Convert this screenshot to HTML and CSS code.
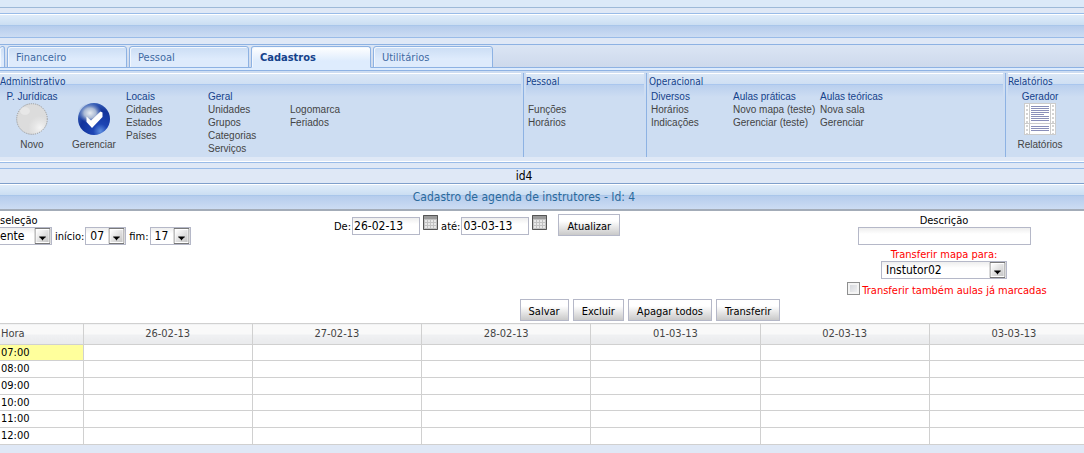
FILE: index.html
```html
<!DOCTYPE html>
<html lang="pt-BR">
<head>
<meta charset="utf-8">
<title>Cadastro de agenda de instrutores</title>
<link rel="stylesheet" href="styles.css">
</head>
<body>
<div class="top-strip"></div>
<div class="panel-header glass"></div>

<nav class="tabs">
  <button class="tab tab-cut" type="button" aria-label="Anterior"></button>
  <button class="tab" type="button">Financeiro</button>
  <button class="tab" type="button">Pessoal</button>
  <button class="tab active" type="button">Cadastros</button>
  <button class="tab" type="button">Utilitários</button>
</nav>
<div class="tab-base"></div>

<div class="ribbon">
  <section class="group group-admin">
    <h2 class="group-title">Administrativo</h2>
    <div class="group-body">
      <div class="tool tool-first">
        <b class="heading">P. Jurídicas</b>
        <svg class="tool-icon" viewBox="0 0 32 32" aria-hidden="true">
          <defs><radialGradient id="shine" cx=".76" cy=".78" r=".38"><stop offset="0" stop-color="#f4f4f4"/><stop offset=".5" stop-color="#e6e6e6"/><stop offset="1" stop-color="#dcdcdc"/></radialGradient></defs>
          <circle cx="16" cy="16" r="15.3" fill="url(#shine)" stroke="#999" stroke-dasharray="1.2 1"/>
          <ellipse cx="9" cy="8" rx="5" ry="4" fill="#f1f1f1" opacity=".5"/>
        </svg>
        <a href="#">Novo</a>
      </div>
      <div class="tool tool-second">
        <b class="heading"></b>
        <svg class="tool-icon" viewBox="0 0 32 32" aria-hidden="true">
          <defs>
            <radialGradient id="ball" cx=".7" cy=".88" r=".9"><stop offset="0" stop-color="#5f8fe0"/><stop offset=".25" stop-color="#1d45b4"/><stop offset=".7" stop-color="#12339b"/><stop offset="1" stop-color="#3a62b8"/></radialGradient>
            <radialGradient id="gloss"><stop offset="0" stop-color="#e8edf2"/><stop offset=".5" stop-color="#a9b9d4"/><stop offset="1" stop-color="#6c8ac6" stop-opacity="0"/></radialGradient>
          </defs>
          <circle cx="16" cy="16" r="16" fill="url(#ball)"/>
          <ellipse cx="12" cy="10" rx="12" ry="10" fill="url(#gloss)"/>
          <path d="M8.500 13.500 13 17.500 22.500 8.500 24.500 9.500V14L14 25 8.500 19z" fill="#fff"/>
        </svg>
        <a href="#">Gerenciar</a>
      </div>
      <div class="links"><b class="heading">Locais</b><a href="#">Cidades</a><a href="#">Estados</a><a href="#">Países</a></div>
      <div class="links"><b class="heading">Geral</b><a href="#">Unidades</a><a href="#">Grupos</a><a href="#">Categorias</a><a href="#">Serviços</a></div>
      <div class="links"><b class="heading"></b><a href="#">Logomarca</a><a href="#">Feriados</a></div>
    </div>
  </section>
  <section class="group group-staff">
    <h2 class="group-title">Pessoal</h2>
    <div class="group-body">
      <div class="links"><b class="heading"></b><a href="#">Funções</a><a href="#">Horários</a></div>
    </div>
  </section>
  <section class="group group-ops">
    <h2 class="group-title">Operacional</h2>
    <div class="group-body">
      <div class="links"><b class="heading">Diversos</b><a href="#">Horários</a><a href="#">Indicações</a></div>
      <div class="links links-wide"><b class="heading">Aulas práticas</b><a href="#">Novo mapa (teste)</a><a href="#">Gerenciar (teste)</a></div>
      <div class="links"><b class="heading">Aulas teóricas</b><a href="#">Nova sala</a><a href="#">Gerenciar</a></div>
    </div>
  </section>
  <section class="group group-reports">
    <h2 class="group-title">Relatórios</h2>
    <div class="group-body">
      <div class="tool tool-report">
        <b class="heading">Gerador</b>
        <svg class="tool-icon" viewBox="0 0 32 32" shape-rendering="crispEdges" aria-hidden="true">
          <path d="M.5.500h31v31H.5z" fill="#fff" stroke="#ccc"/>
          <path d="M3 2v29M29 2v29" stroke="#d4d4d4" stroke-width="2" stroke-dasharray="2 2"/>
          <path d="M5.500 0v32M26.500 0v32M0 20.500h32" stroke="#ccc"/>
          <path d="M7 3.500h18M7 5.500h18M7 7.500h18M7 9.500h18M7 11.500h13M7 13.500h18M7 15.500h18M7 17.500h18M7 23.500h18M7 25.500h18M7 27.500h18" stroke="#8a8fba"/>
        </svg>
        <a href="#">Relatórios</a>
      </div>
    </div>
  </section>
</div>
<div class="ribbon-foot"></div>

<div class="id-bar">id4</div>
<h1 class="title-bar glass">Cadastro de agenda de instrutores - Id: 4</h1>

<form class="form">
  <div class="filters">
    <div class="hours">
      <label for="sel">seleção</label>
      <div class="hours-row">
        <span class="select select-cut"><select id="sel"><option>ente</option></select><svg viewBox="0 0 17 17" aria-hidden="true"><use href="#arrow"/></svg></span>
        <label for="start">início:</label>
        <span class="select select-hour"><select id="start"><option>07</option></select><svg viewBox="0 0 17 17" aria-hidden="true"><use href="#arrow"/></svg></span>
        <label for="end">fim:</label>
        <span class="select select-hour"><select id="end"><option>17</option></select><svg viewBox="0 0 17 17" aria-hidden="true"><use href="#arrow"/></svg></span>
      </div>
    </div>
    <div class="dates">
      <label for="from">De:</label>
      <input class="field date" id="from" type="text" value="26-02-13">
      <svg class="calendar" viewBox="0 0 16 16" aria-hidden="true"><use href="#cal"/></svg>
      <label for="to">até:</label>
      <input class="field date" id="to" type="text" value="03-03-13">
      <svg class="calendar" viewBox="0 0 16 16" aria-hidden="true"><use href="#cal"/></svg>
      <button class="btn refresh" type="button">Atualizar</button>
    </div>
    <div class="transfer">
      <label for="desc">Descrição</label>
      <input class="field desc" id="desc" type="text">
      <label class="red" for="map">Transferir mapa para:</label>
      <span class="select select-map"><select id="map"><option>Instutor02</option></select><svg viewBox="0 0 17 17" aria-hidden="true"><use href="#arrow"/></svg></span>
      <label class="red check"><input type="checkbox">Transferir também aulas já marcadas</label>
    </div>
  </div>
  <div class="actions">
    <button class="btn" type="button">Salvar</button>
    <button class="btn" type="button">Excluir</button>
    <button class="btn" type="button">Apagar todos</button>
    <button class="btn" type="button">Transferir</button>
  </div>
</form>

<table class="agenda">
  <thead>
    <tr><th class="hour">Hora</th><th>26-02-13</th><th>27-02-13</th><th>28-02-13</th><th>01-03-13</th><th>02-03-13</th><th>03-03-13</th></tr>
  </thead>
  <tbody>
    <tr class="current"><td class="hour">07:00</td><td></td><td></td><td></td><td></td><td></td><td></td></tr>
    <tr><td class="hour">08:00</td><td></td><td></td><td></td><td></td><td></td><td></td></tr>
    <tr><td class="hour">09:00</td><td></td><td></td><td></td><td></td><td></td><td></td></tr>
    <tr><td class="hour">10:00</td><td></td><td></td><td></td><td></td><td></td><td></td></tr>
    <tr><td class="hour">11:00</td><td></td><td></td><td></td><td></td><td></td><td></td></tr>
    <tr><td class="hour">12:00</td><td></td><td></td><td></td><td></td><td></td><td></td></tr>
  </tbody>
</table>

<svg class="symbols" aria-hidden="true">
  <defs>
    <linearGradient id="face" x2="1" y2="1"><stop offset="0" stop-color="#fff"/><stop offset="1" stop-color="#c4c4c4"/></linearGradient>
    <symbol id="arrow" viewBox="0 0 17 17">
      <path d="M.5.500h16v16H.5z" fill="#fff" stroke="#6d6d6d"/>
      <path d="M2 2h13v13H2z" fill="url(#face)"/>
      <path d="M5 9h7v1h-1v1h-1v1H9v1H8v-1H7v-1H6v-1H5z" fill="#000"/>
    </symbol>
    <symbol id="cal" viewBox="0 0 16 16">
      <path d="M0 0h15v15H0z" fill="#c2c2c2"/>
      <path d="M0 0h15v4H0z" fill="#9a9a9a"/>
      <path d="M3 5v9M6 5v9M9 5v9M12 5v9" stroke="#e8e8e8" stroke-width="2" stroke-dasharray="2 1"/>
      <path d="M.5.500h14v14H.5z" fill="none" stroke="#555"/>
    </symbol>
  </defs>
</svg>
</body>
</html>
```
FILE: styles.css
```css
* { box-sizing: border-box; }

body {
  margin: 0;
  overflow: hidden;
  background: #dfe8f6;
  color: #000;
  font: 11px/13px Tahoma, "DejaVu Sans Condensed", "Noto Sans", sans-serif;
}

button, input, select { font: inherit; color: inherit; margin: 0; }
a { color: #444; text-decoration: none; }

.top-strip {
  height: 8px;
  background: #dbe9f8;
  border-bottom: 1px solid #9db9d8;
}

.glass {
  background: linear-gradient(#fff 0 1px, #dfecfa 1px, #cbdef2 11px, #a9c6ea 11px 12px, #b5ccec 12px, #ccdcf3 100%);
  border: solid #99bbe8;
  border-width: 1px 0;
}
.panel-header { height: 25px; margin: 5px 0 6px; }

.tabs {
  display: flex;
  gap: 2px;
  height: 24px;
  padding-top: 1px;
  border-top: 1px solid #8db2e3;
  border-bottom: 1px solid #8db2e3;
  background: linear-gradient(#dbe5f4, #cdd9ec);
}
.tab {
  width: 120px;
  height: 22px;
  padding: 0 8px;
  border: 1px solid #8db2e3;
  border-radius: 3px 3px 0 0;
  background: linear-gradient(#cbddf4, #deebfc 60%);
  box-shadow: inset 1px 1px #f2f7fd;
  color: #416aa3;
  line-height: 19px;
  text-align: left;
}
.tab-cut { width: 5px; padding: 0; border-left: 0; }
.tab.active {
  border-bottom-color: #deecfd;
  background: linear-gradient(#fff, #deecfd 70%);
  color: #15428b;
  font-weight: bold;
}
.tab-base { height: 3px; background: #deecfd; border-bottom: 1px solid #8db2e3; }

.ribbon {
  display: flex;
  padding-top: 2px;
  background: #cdddf2;
}
.group { min-height: 84px; border-left: 1px solid #8db2e3; padding: 0 2px; }
.group-admin { flex: 0 0 523px; border-left: 0; padding-left: 0; }
.group-staff { flex: 0 0 123px; }
.group-ops { flex: 1 1 auto; }
.group-reports { flex: 0 0 79px; padding-right: 0; }
.group-title {
  height: 24px;
  margin: 0;
  background: linear-gradient(#fff 0 1px, #dae7f6 1px, #cfdff3 11px, #a9c6ee 11px 12px, #b9cfee 12px, #cdddf2 24px);
  color: #15428b;
  font-size: 10px;
  font-weight: normal;
  line-height: 18px;
}
.group-body {
  display: flex;
  margin-top: -7px;
  font: 10px/13px "Liberation Sans", Arial, sans-serif;
}
.heading { display: block; min-height: 13px; color: #15428b; font-weight: normal; }
.links { flex: 0 0 82px; padding-left: 2px; white-space: nowrap; }
.links-wide { flex-basis: 87px; }
.links a { display: block; }
.tool { display: flex; flex-direction: column; align-items: center; white-space: nowrap; }
.tool-first { flex: 0 0 64px; }
.tool-second { flex: 0 0 60px; }
.tool-report { flex: 0 0 64px; }
.tool-icon { width: 32px; height: 32px; margin-bottom: 3px; }

.ribbon-foot {
  height: 12px;
  background: linear-gradient(#dfe8f6 4px, #fff 4px 5px, #99bbe8 5px 6px, #dfe8f6 6px 11px, #99bbe8 11px);
}
.id-bar { padding: 0 36px 0 0; font-size: 12px; line-height: 14px; text-align: center; }
.title-bar {
  height: 28px;
  margin: 0;
  padding-right: 36px;
  border-width: 1px 0 2px;
  border-color: #7f9fcb transparent #a3acb8;
  color: #2a6a9c;
  font-size: 12px;
  font-weight: normal;
  line-height: 27px;
  text-align: center;
}

.form { padding: 3px 0 2px; background: #fff; }
.filters { display: grid; grid-template-columns: 334px 1fr 280px; }
.hours-row, .dates { display: flex; align-items: center; }
.hours > label { display: block; height: 13px; }
.hours-row { gap: 3px; }
.hours-row label { margin-right: -2px; }

.select { position: relative; display: inline-block; }
.select svg { position: absolute; right: 1px; top: 1px; width: 17px; height: 16px; pointer-events: none; }
.select select {
  appearance: none;
  display: block;
  width: 100%;
  height: 18px;
  padding: 0 4px;
  border: 1px solid #b5b8c8;
  border-radius: 0;
  background: linear-gradient(#eee, #fff 6px);
  font-size: 12px;
}
.select-cut { width: 52px; }
.select-cut select { border-left: 0; padding-left: 0; }
.select-hour { width: 41px; }
.select-map { width: 126px; }

.field {
  height: 18px;
  padding: 0 1px;
  border: 1px solid #b5b8c8;
  background: linear-gradient(#eee, #fff 6px);
  font-size: 12px;
}
.dates { height: 22px; }
.dates .field { margin-top: 2px; }
.dates label { margin-top: 3px; }
.date { width: 68px; margin-left: 1px; }
.calendar { width: 16px; height: 16px; margin: 0 2px 4px 3px; }
.desc { width: 173px; }

.btn {
  height: 22px;
  padding: 2px 8px 0;
  border: 1px solid #b5b8c8;
  background: linear-gradient(#fff 30%, #c9c9c9);
  white-space: nowrap;
}
.refresh { margin-left: 8px; }

.transfer { display: flex; flex-direction: column; align-items: center; }
.red { color: #f00; margin-top: 3px; }
.check { display: flex; align-items: center; gap: 2px; margin-top: 3px; padding-left: 6px; }
.check input {
  appearance: none;
  width: 13px;
  height: 13px;
  margin-bottom: 4px;
  border: 1px solid #8e8f8f;
  background: linear-gradient(135deg, #cfd2d8, #f6f6f6);
  box-shadow: inset 0 0 0 2px #f4f4f4;
}
.actions { display: flex; justify-content: center; gap: 4px; padding-left: 216px; }

/* The last day runs past the right edge of the window. */
.agenda {
  width: calc(100% + 15px);
  table-layout: fixed;
  border-collapse: collapse;
  background: #fff;
}
.agenda th, .agenda td {
  height: 17px;
  padding: 0;
  border: 1px solid #d0d0d0;
  text-align: center;
  line-height: 14px;
}
.agenda tbody tr:nth-child(3n + 1) td { height: 16px; }
.agenda th {
  height: 21px;
  background: linear-gradient(#f9f9f9 50%, #f0f1f3 50%, #e9eaec);
  color: #444;
  font-weight: normal;
}
.agenda .hour { width: 83px; border-left: 0; padding-left: 1px; text-align: left; }
.agenda .current .hour { background: #ffff9c; }

.symbols { position: absolute; width: 0; height: 0; }
```
